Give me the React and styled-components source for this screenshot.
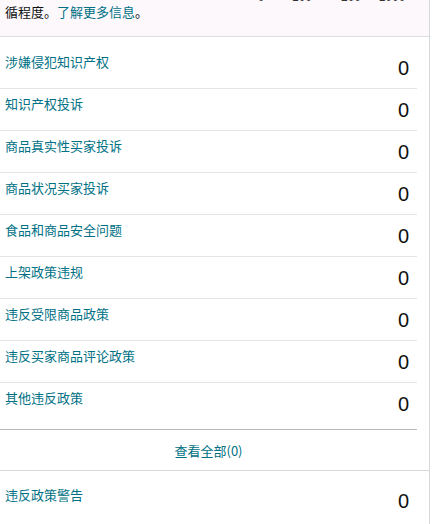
import React from "react";
import styled, { createGlobalStyle } from "styled-components";

const GlobalStyle = createGlobalStyle`
  html, body {
    margin: 0;
    padding: 0;
    background: #ffffff;
  }
  body {
    font-family: "Noto Sans CJK SC", "Liberation Sans", sans-serif;
    color: #0f1111;
  }
`;

const Panel = styled.div`
  width: 429px;
  height: 524px;
  border-right: 1px solid #d5d9d9;
  overflow: hidden;
  box-sizing: content-box;
`;

const Intro = styled.div`
  position: relative;
  height: 37px;
  background: #fcf8fc;
  border-bottom: 1px solid #dddddd;
  padding: 0 5px;
  box-sizing: border-box;
`;

const IntroText = styled.p`
  margin: 0;
  padding-top: 2px;
  font-size: 13px;
  line-height: 19px;
  color: #0f1111;
`;

const Link = styled.a`
  color: #007185;
  text-decoration: none;
  cursor: pointer;
`;

const Axis = styled.div`
  position: absolute;
  top: -10px;
  left: 0;
  right: 0;
  height: 14px;
  font-family: "Liberation Sans", sans-serif;
  font-size: 12px;
  color: #333333;
`;

const Tick = styled.span`
  position: absolute;
  top: 0;
  transform: translateX(-50%);
  white-space: nowrap;
`;

const Section = styled.div`
  padding-top: ${(p) => p.$padTop || 0}px;
  margin-right: 12px;
  border-bottom: ${(p) => (p.$ruled ? "1px solid #bbbbbb" : "none")};
  padding-bottom: ${(p) => p.$padBottom || 0}px;
`;

const Row = styled.div`
  display: flex;
  justify-content: space-between;
  align-items: flex-start;
  height: 41px;
  border-bottom: ${(p) => (p.$last ? "none" : "1px solid #e3e6e6")};
  padding: 0 8px 0 5px;
`;

const Label = styled(Link)`
  font-size: 13px;
  line-height: 17px;
  padding-top: 6px;
`;

const Count = styled.span`
  font-family: "Liberation Sans", sans-serif;
  font-size: 20px;
  line-height: 22px;
  padding-top: 10px;
  color: #0f1111;
`;

const ViewAll = styled.div`
  height: 40px;
  display: flex;
  align-items: center;
  justify-content: center;
  border-bottom: 1px solid #d5d9d9;
  padding-right: 12px;
  font-size: 13px;
`;

const items = [
  "涉嫌侵犯知识产权",
  "知识产权投诉",
  "商品真实性买家投诉",
  "商品状况买家投诉",
  "食品和商品安全问题",
  "上架政策违规",
  "违反受限商品政策",
  "违反买家商品评论政策",
  "其他违反政策",
];

const ticks = [
  { label: "0", x: 261 },
  { label: "100", x: 302 },
  { label: "200", x: 351 },
  { label: "1000", x: 392 },
];

export default function App() {
  return (
    <>
      <GlobalStyle />
      <Panel>
        <Intro>
          <Axis>
            {ticks.map((t) => (
              <Tick key={t.label} style={{ left: t.x }}>
                {t.label}
              </Tick>
            ))}
          </Axis>
          <IntroText>
            循程度。<Link>了解更多信息</Link>。
          </IntroText>
        </Intro>
        <Section $padTop={10} $padBottom={5} $ruled>
          {items.map((name, i) => (
            <Row key={name} $last={i === items.length - 1}>
              <Label>{name}</Label>
              <Count>0</Count>
            </Row>
          ))}
        </Section>
        <ViewAll>
          <Link>查看全部(0)</Link>
        </ViewAll>
        <Section $padTop={9}>
          <Row $last>
            <Label>违反政策警告</Label>
            <Count>0</Count>
          </Row>
        </Section>
      </Panel>
    </>
  );
}
